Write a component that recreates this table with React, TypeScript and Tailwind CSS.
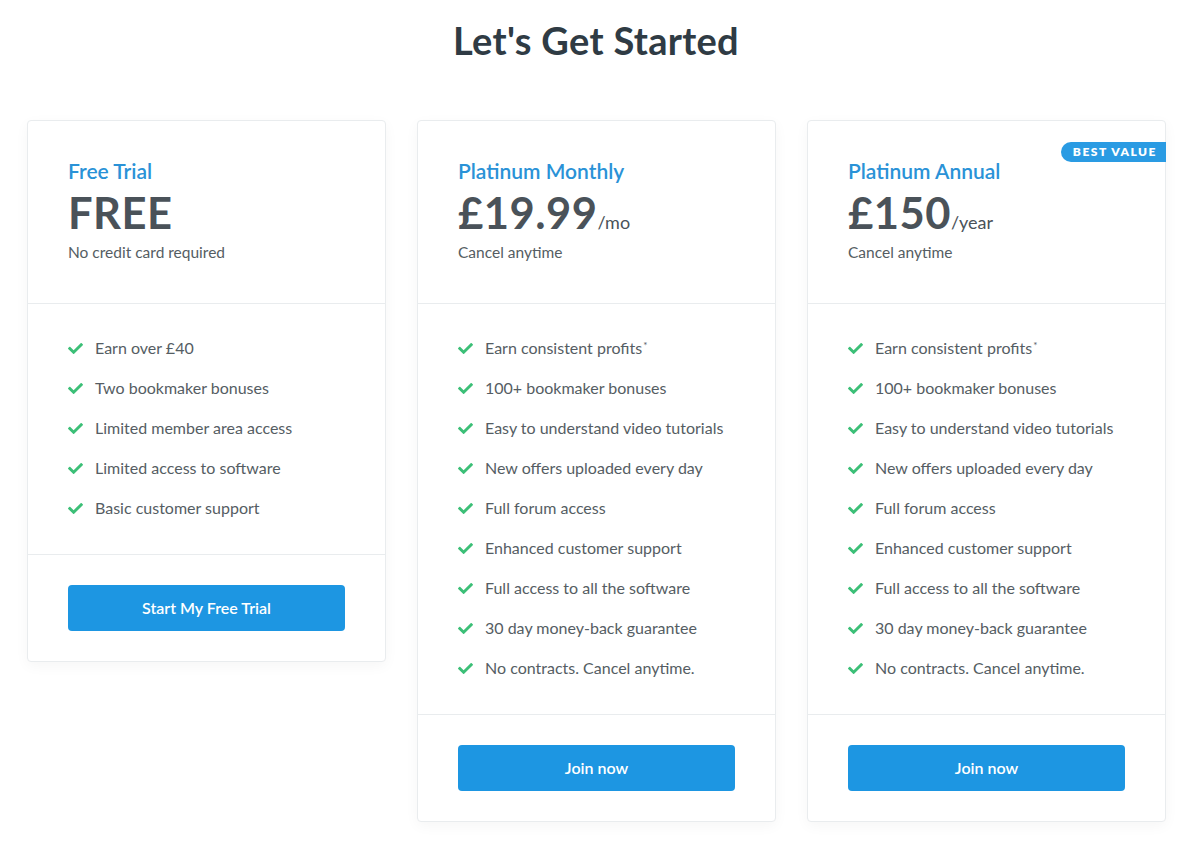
import { FaCheck } from 'react-icons/fa'

type Plan = {
  name: string
  price: string
  unit?: string
  note: string
  features: string[]
  cta: string
  badge?: string
}

const paid = [
  'Earn consistent profits*',
  '100+ bookmaker bonuses',
  'Easy to understand video tutorials',
  'New offers uploaded every day',
  'Full forum access',
  'Enhanced customer support',
  'Full access to all the software',
  '30 day money-back guarantee',
  'No contracts. Cancel anytime.',
]

const plans: Plan[] = [
  {
    name: 'Free Trial',
    price: 'FREE',
    note: 'No credit card required',
    features: [
      'Earn over £40',
      'Two bookmaker bonuses',
      'Limited member area access',
      'Limited access to software',
      'Basic customer support',
    ],
    cta: 'Start My Free Trial',
  },
  {
    name: 'Platinum Monthly',
    price: '£19.99',
    unit: '/mo',
    note: 'Cancel anytime',
    features: paid,
    cta: 'Join now',
  },
  {
    name: 'Platinum Annual',
    price: '£150',
    unit: '/year',
    note: 'Cancel anytime',
    features: paid,
    cta: 'Join now',
    badge: 'BEST VALUE',
  },
]

function Feature({ text }: { text: string }) {
  const star = text.endsWith('*')
  const label = star ? text.slice(0, -1) : text
  return (
    <li className="flex items-center h-10">
      <FaCheck className="text-[#3cbf77] w-[15px] h-[15px] shrink-0" />
      <span className="ml-3 text-[16px] text-[#555d63]">
        {label}
        {star && <sup className="text-[10px] ml-px">*</sup>}
      </span>
    </li>
  )
}

function PlanCard({ plan }: { plan: Plan }) {
  return (
    <div className="relative w-[359px] bg-white border border-[#e9ecee] rounded-[4px] shadow-[0_4px_14px_rgba(0,0,0,0.04)]">
      {plan.badge && (
        <div className="absolute right-[-1px] top-[21px] h-[20px] pl-[12px] pr-[9px] flex items-center bg-[#2a9be3] rounded-l-full text-white text-[12px] font-extrabold tracking-[1.5px]">
          {plan.badge}
        </div>
      )}
      <div className="px-10 pt-[37px] pb-[41px] border-b border-[#e9ecee]">
        <h2 className="text-[21px] font-semibold text-[#2a92d7] leading-[26px]">{plan.name}</h2>
        <div className="flex items-baseline mt-[3px] h-[50px]">
          <span className="text-[43.5px] font-bold text-[#4a5259] tracking-[0.5px] leading-[50px]">{plan.price}</span>
          {plan.unit && <span className="text-[18px] text-[#4a5259]">{plan.unit}</span>}
        </div>
        <p className="text-[15.5px] text-[#555d63] mt-[5px] leading-[20px]">{plan.note}</p>
      </div>
      <ul className="px-10 pt-[24px] pb-[26px] border-b border-[#e9ecee]">
        {plan.features.map((f) => (
          <Feature key={f} text={f} />
        ))}
      </ul>
      <div className="px-10 py-[30px]">
        <button className="w-full h-[46px] bg-[#1d96e2] rounded-[4px] text-white text-[16px] font-semibold">
          {plan.cta}
        </button>
      </div>
    </div>
  )
}

export default function App() {
  return (
    <div className="min-h-screen bg-white font-['Lato',sans-serif]">
      <h1 className="pt-[18px] text-center text-[38px] font-bold text-[#2f3b44] tracking-[0.3px] leading-[44px] pr-[12px]">
        Let's Get Started
      </h1>
      <div className="flex items-start gap-[31px] pl-[27px] mt-[58px]">
        {plans.map((p) => (
          <PlanCard key={p.name} plan={p} />
        ))}
      </div>
    </div>
  )
}
